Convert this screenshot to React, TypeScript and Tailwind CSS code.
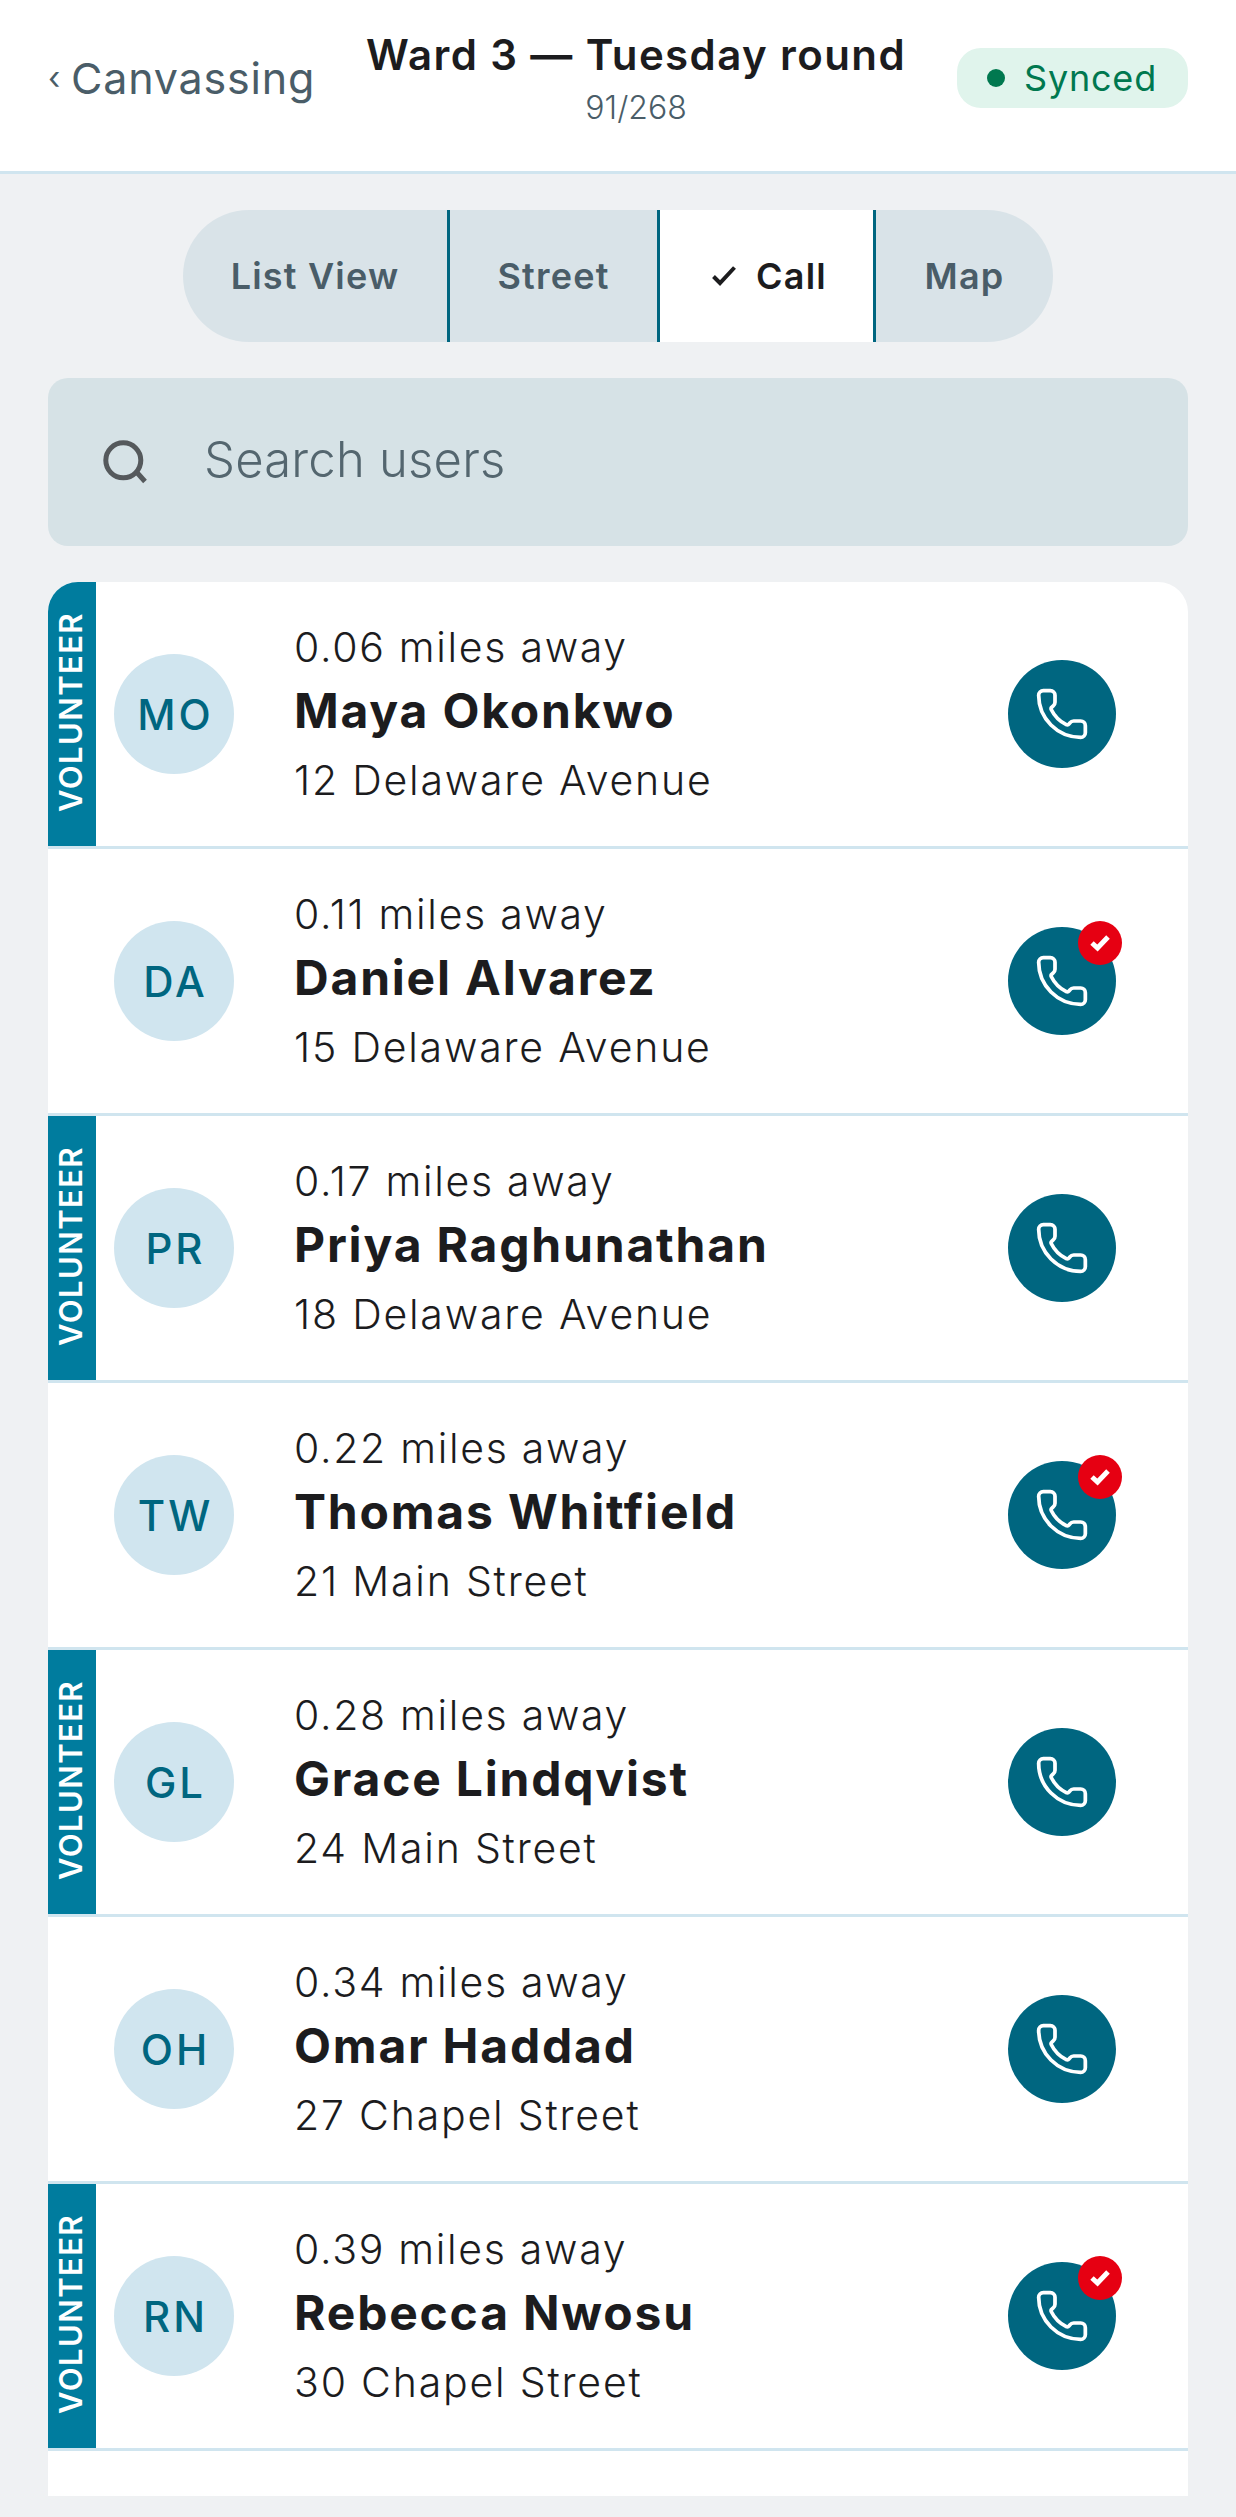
import { Phone } from "lucide-react";

const people = [
  { initials: "MO", miles: "0.06", name: "Maya Okonkwo", address: "12 Delaware Avenue", volunteer: true, done: false },
  { initials: "DA", miles: "0.11", name: "Daniel Alvarez", address: "15 Delaware Avenue", volunteer: false, done: true },
  { initials: "PR", miles: "0.17", name: "Priya Raghunathan", address: "18 Delaware Avenue", volunteer: true, done: false },
  { initials: "TW", miles: "0.22", name: "Thomas Whitfield", address: "21 Main Street", volunteer: false, done: true },
  { initials: "GL", miles: "0.28", name: "Grace Lindqvist", address: "24 Main Street", volunteer: true, done: false },
  { initials: "OH", miles: "0.34", name: "Omar Haddad", address: "27 Chapel Street", volunteer: false, done: false },
  { initials: "RN", miles: "0.39", name: "Rebecca Nwosu", address: "30 Chapel Street", volunteer: true, done: true },
];

const tabs = [
  { label: "List View", width: "w-[264px]" },
  { label: "Street", width: "w-[210px]" },
  { label: "Call", width: "w-[216px]", active: true },
  { label: "Map", width: "w-[180px]" },
];

function App() {
  return (
    <div className="min-h-[2517px] bg-[#eff1f3] font-['Inter','Noto_Sans',sans-serif] text-[#1c1c1e]">
      <header className="flex h-[174px] items-start justify-between border-b-[3px] border-[#d0e5ef] bg-white px-12">
        <div className="mt-[52px] flex items-center gap-[10px] text-[43px] leading-[52px] tracking-[0.8px] text-[#4a5d68]">
          <span className="text-[32px]">‹</span>
          <span>Canvassing</span>
        </div>
        <div className="mt-[30px] text-center">
          <div className="text-[42px] font-semibold leading-[50px] tracking-[1.4px]">Ward 3 — Tuesday round</div>
          <div className="mt-[8px] text-[32px] font-light leading-[40px] text-[#4a5d68]">91/268</div>
        </div>
        <div className="mt-[48px] flex h-[60px] items-center gap-[19px] rounded-[24px] bg-[#e0f4ec] pl-[30px] pr-[31px] text-[36px] tracking-[0.8px] text-[#00784f]">
          <span className="h-[18px] w-[18px] rounded-full bg-[#00784f]"></span>
          Synced
        </div>
      </header>

      <main className="px-12">
        <div className="mt-[36px] flex justify-center">
          <div className="flex h-[132px] overflow-hidden rounded-full bg-[#d9e3e8]">
            {tabs.map((tab, i) => (
              <div
                key={tab.label}
                className={`flex items-center justify-center gap-[20px] text-[36px] font-semibold tracking-[1.2px] ${tab.width} ${
                  i > 0 ? "border-l-[3px] border-[#006680]" : ""
                } ${tab.active ? "bg-white pl-[6px] text-[#1c1c1e]" : "text-[#4a5d68]"}`}
              >
                {tab.active && (
                  <svg width="24" height="20" viewBox="0 0 24 20" fill="none" stroke="currentColor" strokeWidth="4">
                    <path d="M1.5 10.5 L8 17 L22.5 1.5" />
                  </svg>
                )}
                {tab.label}
              </div>
            ))}
          </div>
        </div>

        <div className="mt-[36px] flex h-[168px] items-center rounded-[20px] bg-[#d6e2e6] pl-[55px] text-[49px] font-light tracking-[0.2px] text-[#54666f]">
          <svg width="44" height="44" viewBox="0 0 44 44" fill="none" stroke="#55595c" strokeWidth="5">
            <circle cx="20.3" cy="20.3" r="17.5" />
            <path d="M33.5 32 L42 41.5" />
          </svg>
          <span className="ml-[57px] -translate-y-[2px]">Search users</span>
        </div>

        <div className="mt-[36px] overflow-hidden rounded-t-[30px] bg-white pb-[45px]">
          {people.map((p) => (
            <div key={p.initials} className="flex h-[267px] items-stretch border-b-[3px] border-[#d0e5ef]">
              <div className={`flex w-12 items-center justify-center ${p.volunteer ? "bg-[#007c9e]" : ""}`}>
                {p.volunteer && (
                  <span className="-translate-x-px -translate-y-[2px] rotate-180 text-[31px] font-semibold tracking-[1.4px] text-white [writing-mode:vertical-rl]">
                    VOLUNTEER
                  </span>
                )}
              </div>
              <div className="ml-[18px] flex flex-1 items-center">
                <div className="flex h-[120px] w-[120px] items-center justify-center rounded-full bg-[#d0e5ef] pl-[3px] text-[42px] font-medium tracking-[3px] text-[#006680]">
                  {p.initials}
                </div>
                <div className="ml-[60px] flex-1">
                  <div className="text-[41px] font-light leading-[52px] tracking-[1.7px]">{p.miles} miles away</div>
                  <div className="text-[48px] font-bold leading-[76px] tracking-[1.8px]">{p.name}</div>
                  <div className="mt-[3px] text-[41px] font-light leading-[56px] tracking-[1.8px]">{p.address}</div>
                </div>
                <div className="relative mr-[72px] flex h-[108px] w-[108px] items-center justify-center rounded-full bg-[#006680] text-white">
                  <Phone size={56} strokeWidth={1.6} />
                  {p.done && (
                    <span className="absolute -right-[6px] -top-[6px] flex h-[44px] w-[44px] items-center justify-center rounded-full bg-[#e60012]">
                      <svg width="22" height="18" viewBox="0 0 22 18" fill="none" stroke="currentColor" strokeWidth="5">
                        <path d="M3 9 L8.5 14 L19 3" />
                      </svg>
                    </span>
                  )}
                </div>
              </div>
            </div>
          ))}
        </div>
      </main>
    </div>
  );
}

export default App;
